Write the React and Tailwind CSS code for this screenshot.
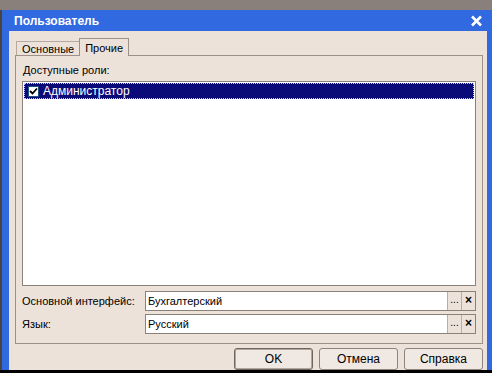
import React from 'react';

const font = { fontFamily: '"Liberation Sans", Arial, sans-serif' };

const Field = ({ label, value }) => (
  <div className="flex items-center h-[20px]">
    <div className="w-[123px] whitespace-nowrap text-[11px] text-black">{label}</div>
    <div className="flex-1 h-[20px] flex border border-[#8a8179] bg-white">
      <div className="flex-1 px-[2px] text-[11px] leading-[18px] text-black">{value}</div>
      <div className="w-[14px] bg-[#ece2da] border-l border-[#b9ada4] text-[10px] leading-[16px] text-center text-black">...</div>
      <div className="w-[14px] bg-[#ece2da] border-l border-[#b9ada4] text-[12px] leading-[17px] text-center font-bold text-black">×</div>
    </div>
  </div>
);

const Btn = ({ children, def }) => (
  <button
    className={
      'w-[79px] h-[22px] rounded-[3px] bg-[#f0e9e3] text-[12px] text-black border ' +
      (def ? 'border-[#6f655d] shadow-[inset_0_0_0_1px_#b0a69d]' : 'border-[#8e847b]')
    }
  >
    {children}
  </button>
);

export default function App() {
  return (
    <div className="w-[492px] h-[373px] bg-black flex flex-col overflow-hidden" style={font}>
      <div className="h-[10px] bg-[#8a807b]" />
      <div className="h-[360px] flex">
        <div className="w-[2px] bg-[#4a4440]" />
        <div className="flex-1 bg-[#3169e0] flex flex-col pl-[7px] pr-[5px]">
          {/* Заголовок */}
          <div className="h-[22px] flex items-center justify-between pl-[5px] pr-[4px]">
            <span className="text-white font-bold text-[12px]">Пользователь</span>
            <svg width="13" height="12" viewBox="0 0 13 12">
              <path d="M2 1.5 L11 10.5 M11 1.5 L2 10.5" stroke="white" strokeWidth="2.6" />
            </svg>
          </div>
          {/* Содержимое */}
          <div className="flex-1 bg-[#ece2da] flex flex-col pl-[6px] pr-[4px] pt-[7px]">
            <div className="flex items-end h-[17px] pl-[1px]">
              <div className="h-[14px] px-[5px] border-t border-l border-[#b6aaa0] text-[11px] leading-[14px] text-black">Основные</div>
              <div className="h-[18px] px-[5px] border-t border-l border-r border-[#9c9088] bg-[#ece2da] text-[11px] leading-[18px] text-black -mb-px relative z-10">Прочие</div>
            </div>
            <div className="h-[289px] border border-[#9c9088] px-[6px] pt-[8px] flex flex-col">
              <div className="text-[11px] leading-[13px] text-black pl-[1px]">Доступные роли:</div>
              <div className="mt-[4px] h-[205px] bg-white border border-[#8a8179] p-[1px]">
                <div className="h-[16px] bg-[#0a0a78] border border-dotted border-[#c8c8ff] flex items-center pl-[3px]">
                  <div className="w-[11px] h-[11px] bg-white border border-[#1c5180] flex items-center justify-center">
                    <svg width="9" height="9" viewBox="0 0 9 9">
                      <path d="M1 4 L3.5 6.5 L8 1.5" stroke="black" strokeWidth="1.8" fill="none" />
                    </svg>
                  </div>
                  <span className="ml-[4px] text-white text-[12px]">Администратор</span>
                </div>
              </div>
              <div className="mt-[5px] flex flex-col gap-[3px]">
                <Field label="Основной интерфейс:" value="Бухгалтерский" />
                <Field label="Язык:" value="Русский" />
              </div>
            </div>
            <div className="flex justify-end gap-[6px] mt-[4px]">
              <Btn def>OK</Btn>
              <Btn>Отмена</Btn>
              <Btn>Справка</Btn>
            </div>
          </div>
        </div>
      </div>
    </div>
  );
}
